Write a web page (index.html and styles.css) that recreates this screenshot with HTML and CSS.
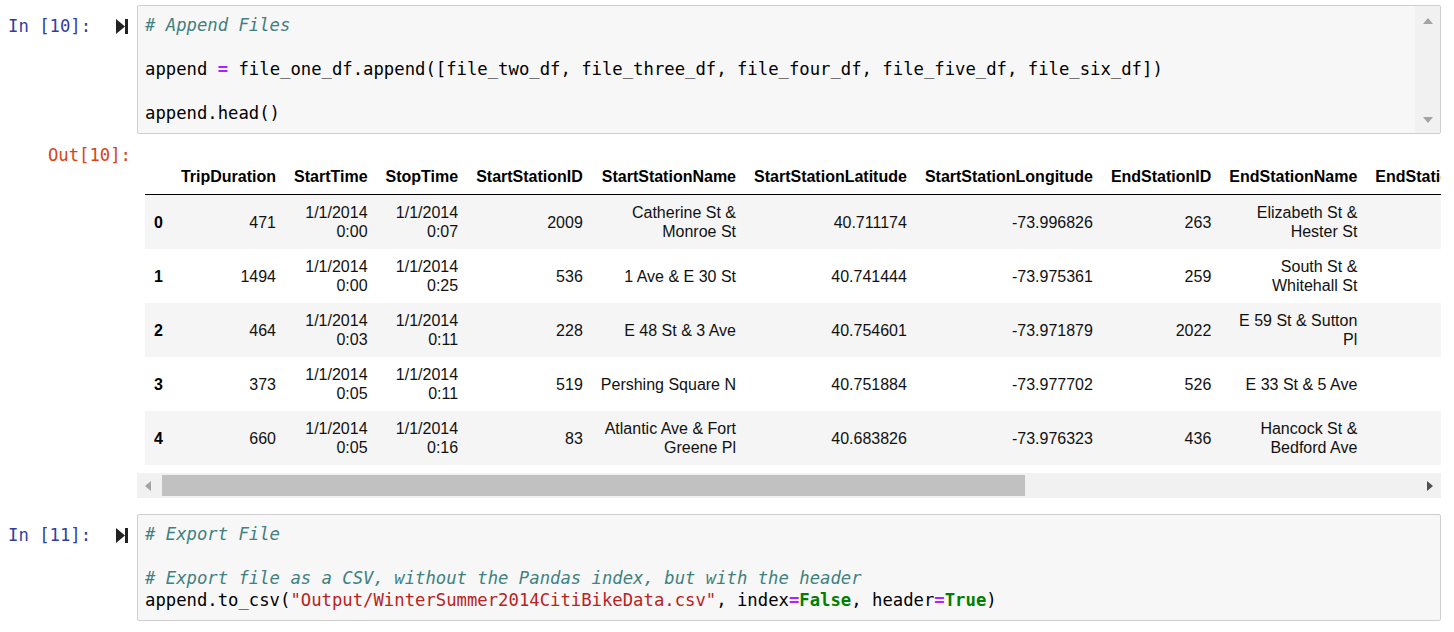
FILE: index.html
```html
<!DOCTYPE html>
<html lang="en">
<head>
<meta charset="utf-8">
<title>Notebook</title>
<link rel="stylesheet" href="styles.css">
</head>
<body>
<div class="notebook">
  <div class="cell">
    <div class="input">
      <div class="prompt in-prompt">
        <span class="prompt-text">In [10]:</span>
        <svg class="run-icon" width="13" height="15" viewBox="0 0 13 15"><polygon points="0,0 9,7.5 0,15" fill="#222"/><rect x="9" y="0" width="3" height="15" fill="#222"/></svg>
      </div>
      <div class="code-box">
        <pre class="code"><span class="c"># Append Files</span>

append <span class="o">=</span> file_one_df.append([file_two_df, file_three_df, file_four_df, file_five_df, file_six_df])

append.head()</pre>
        <div class="vscroll">
          <svg width="10" height="6" viewBox="0 0 10 6"><polygon points="0,6 5,0 10,6" fill="#a3a3a3"/></svg>
          <svg width="10" height="6" viewBox="0 0 10 6"><polygon points="0,0 10,0 5,6" fill="#a3a3a3"/></svg>
        </div>
      </div>
    </div>
    <div class="output">
      <div class="prompt out-prompt"><span class="prompt-text">Out[10]:</span></div>
      <div class="output-area">
        <div class="table-wrap">
          <table class="df">
            <thead>
              <tr>
                <th></th>
                <th>TripDuration</th>
                <th>StartTime</th>
                <th>StopTime</th>
                <th>StartStationID</th>
                <th>StartStationName</th>
                <th>StartStationLatitude</th>
                <th>StartStationLongitude</th>
                <th>EndStationID</th>
                <th>EndStationName</th>
                <th>EndStationLatitude</th>
                <th>EndStationLongitude</th>
              </tr>
            </thead>
            <tbody>
              <tr>
                <th>0</th><td>471</td><td>1/1/2014 0:00</td><td>1/1/2014 0:07</td><td>2009</td><td>Catherine St &amp; Monroe St</td><td>40.711174</td><td>-73.996826</td><td>263</td><td>Elizabeth St &amp; Hester St</td><td>40.717290</td><td>-73.996375</td>
              </tr>
              <tr>
                <th>1</th><td>1494</td><td>1/1/2014 0:00</td><td>1/1/2014 0:25</td><td>536</td><td>1 Ave &amp; E 30 St</td><td>40.741444</td><td>-73.975361</td><td>259</td><td>South St &amp; Whitehall St</td><td>40.701221</td><td>-74.012342</td>
              </tr>
              <tr>
                <th>2</th><td>464</td><td>1/1/2014 0:03</td><td>1/1/2014 0:11</td><td>228</td><td>E 48 St &amp; 3 Ave</td><td>40.754601</td><td>-73.971879</td><td>2022</td><td>E 59 St &amp; Sutton Pl</td><td>40.758491</td><td>-73.959206</td>
              </tr>
              <tr>
                <th>3</th><td>373</td><td>1/1/2014 0:05</td><td>1/1/2014 0:11</td><td>519</td><td class="nowrap">Pershing Square N</td><td>40.751884</td><td>-73.977702</td><td>526</td><td>E 33 St &amp; 5 Ave</td><td>40.747659</td><td>-73.984907</td>
              </tr>
              <tr>
                <th>4</th><td>660</td><td>1/1/2014 0:05</td><td>1/1/2014 0:16</td><td>83</td><td>Atlantic Ave &amp; Fort Greene Pl</td><td>40.683826</td><td>-73.976323</td><td>436</td><td>Hancock St &amp; Bedford Ave</td><td>40.682166</td><td>-73.953990</td>
              </tr>
            </tbody>
          </table>
        </div>
        <div class="hscroll">
          <svg class="harrow" width="6" height="10" viewBox="0 0 6 10"><polygon points="6,0 6,10 0,5" fill="#a3a3a3"/></svg>
          <div class="hthumb-track"><div class="hthumb"></div></div>
          <svg class="harrow" width="6" height="10" viewBox="0 0 6 10"><polygon points="0,0 6,5 0,10" fill="#505050"/></svg>
        </div>
      </div>
    </div>
  </div>

  <div class="cell cell-second">
    <div class="input">
      <div class="prompt in-prompt">
        <span class="prompt-text">In [11]:</span>
        <svg class="run-icon" width="13" height="15" viewBox="0 0 13 15"><polygon points="0,0 9,7.5 0,15" fill="#222"/><rect x="9" y="0" width="3" height="15" fill="#222"/></svg>
      </div>
      <div class="code-box">
        <pre class="code"><span class="c"># Export File</span>

<span class="c"># Export file as a CSV, without the Pandas index, but with the header</span>
append.to_csv(<span class="s">"Output/WinterSummer2014CitiBikeData.csv"</span>, index<span class="o">=</span><span class="k">False</span>, header<span class="o">=</span><span class="k">True</span>)</pre>
      </div>
    </div>
  </div>
</div>
</body>
</html>
```

FILE: styles.css
```css
html, body {
  margin: 0;
  padding: 0;
  background: #ffffff;
}

.notebook {
  padding-top: 5px;
  width: 1441px;
}

.input {
  display: flex;
  align-items: flex-start;
}

.prompt {
  width: 137px;
  flex: 0 0 137px;
  box-sizing: border-box;
  font-family: "DejaVu Sans Mono", "Liberation Mono", monospace;
  font-size: 17.25px;
  line-height: 22px;
}

.in-prompt {
  display: flex;
  align-items: center;
  justify-content: space-between;
  padding: 10px 7px 0 8px;
  color: #303f9f;
}

.run-icon {
  display: block;
  margin-right: 1px;
}

.out-prompt {
  padding: 10px 6px 0 0;
  text-align: right;
  color: #d84315;
}

.code-box {
  flex: 1 1 auto;
  display: flex;
  border: 1px solid #cfcfcf;
  border-radius: 2px;
  background: #f7f7f7;
}

.code {
  flex: 1 1 auto;
  margin: 0;
  padding: 8px 7px 9px 7px;
  font-family: "DejaVu Sans Mono", "Liberation Mono", monospace;
  font-size: 17.25px;
  line-height: 22px;
  color: #000000;
  white-space: pre;
}

.c {
  color: #408080;
  font-style: italic;
}

.o {
  color: #aa22ff;
  font-weight: bold;
}

.s {
  color: #ba2121;
}

.k {
  color: #008000;
  font-weight: bold;
}

.vscroll {
  flex: 0 0 25px;
  display: flex;
  flex-direction: column;
  align-items: center;
  justify-content: space-between;
  padding: 12px 0 10px;
  background: #f1f1f1;
}

.vscroll svg {
  display: block;
}

.output {
  display: flex;
  align-items: flex-start;
}

.output-area {
  flex: 1 1 auto;
  min-width: 0;
  padding-top: 25px;
}

.table-wrap {
  overflow: hidden;
  padding-left: 8px;
}

.df {
  width: 1px;
  border-collapse: collapse;
  border-spacing: 0;
  font-family: "Liberation Sans", Arial, sans-serif;
  font-size: 16px;
  line-height: 19px;
  color: #000000;
}

.df th,
.df td {
  padding: 8px 9px;
  text-align: right;
  vertical-align: middle;
  white-space: normal;
}

.df thead th {
  font-weight: bold;
  border-bottom: 1px solid #000000;
  white-space: nowrap;
}

.df tbody th {
  font-weight: bold;
  text-align: left;
}

.df td {
  color: #111111;
}

.df td.nowrap {
  white-space: nowrap;
}

.df tbody tr:nth-child(odd) {
  background: #f5f5f5;
}

.hscroll {
  margin-top: 8px;
  height: 25px;
  display: flex;
  align-items: center;
  background: #f1f1f1;
  padding: 0 8px;
}

.harrow {
  display: block;
  flex: 0 0 6px;
}

.hthumb-track {
  flex: 1 1 auto;
  height: 21px;
  margin: 0 9px 0 11px;
}

.hthumb {
  width: 863px;
  height: 21px;
  background: #c1c1c1;
}

.cell-second {
  margin-top: 16px;
}
```
